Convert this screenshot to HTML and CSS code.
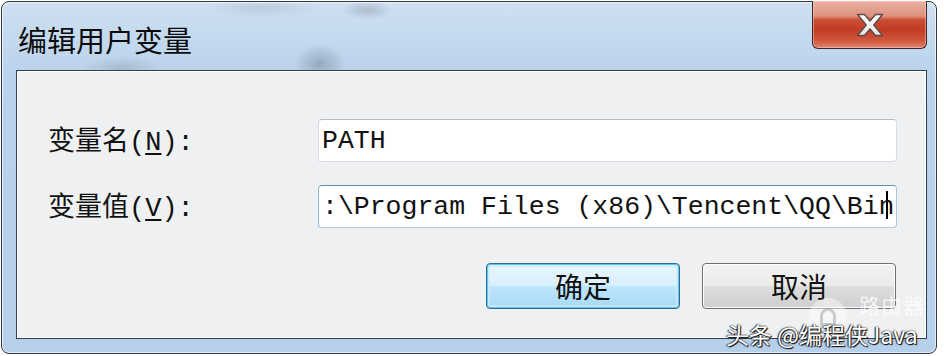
FILE: index.html
```html
<!DOCTYPE html>
<html>
	<head>
		<meta charset="UTF-8">
		<title>编辑用户变量</title>
		<link rel="stylesheet" href="styles.css">
	</head>
	<body>
		<div class="window">
			<div class="titlebar">
				<div class="title">编辑用户变量</div>
				<div class="close">
					<svg width="28" height="24" viewBox="0 0 28 24">
						<defs>
							<linearGradient id="xg" x1="0" y1="0" x2="0" y2="1">
								<stop offset="0" stop-color="#ffffff"/>
								<stop offset="1" stop-color="#e6e2e2"/>
							</linearGradient>
						</defs>
						<polygon points="1.5,1.5 8.5,1.5 14,8 19.5,1.5 26.5,1.5 17.8,12 26.5,22.5 19.5,22.5 14,16 8.5,22.5 1.5,22.5 10.2,12" fill="url(#xg)" stroke="#5e4a4a" stroke-width="1.4" stroke-linejoin="round"/>
					</svg>
				</div>
			</div>
			<div class="client">
				<div class="form">
					<label class="label">变量名<span class="key">(<u>N</u>):</span></label>
					<div class="field"><span class="value">PATH</span></div>
					<label class="label">变量值<span class="key">(<u>V</u>):</span></label>
					<div class="field focus"><span class="value caret">:\Program Files (x86)\Tencent\QQ\Bin</span></div>
				</div>
				<div class="buttons">
					<div class="btn default">确定</div>
					<div class="btn">取消</div>
				</div>
			</div>
			<!-- 水印 -->
			<div class="mark-logo"><span></span></div>
			<div class="mark-site">路由器</div>
			<div class="mark-text">头条 @编程侠Java</div>
		</div>
	</body>
</html>
```

FILE: styles.css
```css
* {
	margin: 0;
	padding: 0;
	box-sizing: border-box;
}
body {
	background: #fff;
	font-family: "Noto Sans CJK SC", "Liberation Sans", sans-serif;
	color: #111;
}
.window {
	position: relative;
	width: 936px;
	margin: 1px 0 0 1px;
	padding: 0 9px 14px 14px;
	border: 1px solid #2e3744;
	border-radius: 8px;
	box-shadow: inset 0 0 0 1px rgba(255,255,255,.65);
	background:
		radial-gradient(ellipse 26px 20px at 318px 62px, rgba(80,90,105,.35), rgba(80,90,105,0)),
		radial-gradient(ellipse 40px 12px at 120px 66px, rgba(90,100,115,.22), rgba(90,100,115,0)),
		radial-gradient(ellipse 26px 10px at 365px 8px, rgba(90,100,115,.28), rgba(90,100,115,0)),
		radial-gradient(ellipse 60px 10px at 260px 6px, rgba(110,120,135,.18), rgba(110,120,135,0)),
		linear-gradient(#cfe0f1, #bad3ec 70px, #b6d0eb 100%);
}
.titlebar {
	display: flex;
	justify-content: space-between;
	align-items: flex-start;
	height: 68px;
}
.title {
	padding: 21px 0 0 2px;
	font-size: 29px;
	line-height: 32px;
	color: #0c0c0c;
}
.close {
	display: flex;
	align-items: center;
	justify-content: center;
	width: 115px;
	height: 48px;
	margin-top: -1px;
	border: 1px solid #3e2626;
	border-top: none;
	border-radius: 0 0 6px 6px;
	background: linear-gradient(#e9b1a2, #de927e 32%, #cb4d34 40%, #c13c24 62%, #d1583e 85%, #de8670);
	box-shadow: inset 0 0 0 1px rgba(255,220,210,.45);
}
.client {
	border: 1px solid #34404f;
	background: #eef0f2;
	box-shadow: inset 0 0 0 1px #fbfcfd;
	padding: 48px 29px 29px 31px;
}
.form {
	display: grid;
	grid-template-columns: 270px 1fr;
	row-gap: 23px;
	align-items: center;
}
.label {
	font-size: 27px;
	line-height: 30px;
	color: #111;
}
.key {
	font-family: "Liberation Mono", monospace;
	font-size: 27px;
}
.key u {
	text-underline-offset: 3px;
}
.field {
	height: 43px;
	display: flex;
	align-items: center;
	padding: 0 3px;
	overflow: hidden;
	white-space: nowrap;
	background: #fff;
	border: 1px solid #d8dce2;
	border-top-color: #b6bac1;
	border-radius: 4px;
}
.field.focus {
	border-color: #a9c9e2;
	border-top-color: #5e8fb9;
	border-left-color: #8fb4d4;
}
.value {
	font-family: "Liberation Mono", monospace;
	font-size: 26.5px;
	line-height: 30px;
	color: #111;
}
.caret:after {
	content: '';
	display: inline-block;
	width: 2px;
	height: 28px;
	margin-left: -9px;
	vertical-align: -5px;
	background: #000;
}
.buttons {
	display: flex;
	justify-content: flex-end;
	gap: 22px;
	margin: 35px 1px 0 0;
}
.btn {
	width: 194px;
	height: 46px;
	display: flex;
	align-items: center;
	justify-content: center;
	font-size: 28px;
	color: #111;
	border: 1px solid #707070;
	border-radius: 4px;
	background: linear-gradient(#f3f3f3, #ebebeb 48%, #dddddd 52%, #cfcfcf);
	box-shadow: inset 0 0 0 1px #fcfcfc;
}
.btn.default {
	border-color: #2f6b96;
	background: linear-gradient(#eaf6fd, #d9f0fc 48%, #bee6fd 52%, #a7d9f5);
	box-shadow: inset 0 0 0 1px #5ec6ef, inset 0 0 0 3px rgba(200,235,250,.8);
}
.mark-logo {
	position: absolute;
	left: 807px;
	top: 296px;
	width: 38px;
	height: 38px;
	border-radius: 50%;
	background: rgba(255,255,255,.45);
}
.mark-logo span {
	position: absolute;
	left: 11px;
	top: 10px;
	width: 16px;
	height: 18px;
	border: 3px solid rgba(120,120,120,.35);
	border-radius: 8px 8px 2px 2px;
}
.mark-site {
	position: absolute;
	left: 857px;
	top: 291px;
	font-size: 21px;
	line-height: 22px;
	letter-spacing: 1px;
	color: rgba(255,255,255,.8);
}
.mark-text {
	position: absolute;
	left: 724px;
	top: 322px;
	font-size: 23px;
	line-height: 20px;
	color: #fff;
	text-shadow: 0 0 2px #222, 1px 1px 1px #000, -1px 0 1px #333;
	white-space: nowrap;
}
```
